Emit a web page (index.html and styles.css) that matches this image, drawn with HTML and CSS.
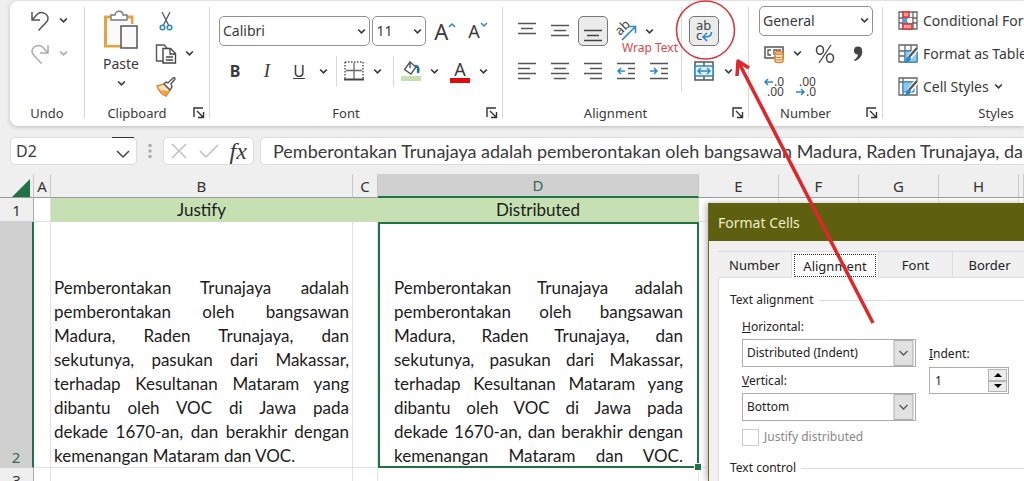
FILE: index.html
```html
<!DOCTYPE html>
<html lang="en">
<head>
<meta charset="utf-8">
<title>Format Cells</title>
<link rel="stylesheet" href="styles.css">
</head>
<body>
<svg class="sprite" aria-hidden="true">
  <symbol id="chev" viewBox="0 0 8 6"><path d="M1 1.200 4 4.200 7 1.200" fill="none" stroke="currentColor" stroke-width="1.500"/></symbol>
  <symbol id="launch" viewBox="0 0 12 12"><path d="M1 10V1h9M4 4l6 6M10.500 5v5.500H5" fill="none" stroke="#333" stroke-width="1.400"/></symbol>
</svg>

<header class="ribbon">
  <section class="group undo">
    <div class="body three">
      <div class="row">
        <button class="tool" aria-label="Undo"><svg width="20" height="22" viewBox="0 0 20 22"><path d="M2 2v8h8M2.500 9.500 7 4.500c4-4 11-1 11 4 0 2-1 3-2 4L8.500 20.500" fill="none" stroke="#555" stroke-width="1.500"/></svg></button>
        <button class="drop" aria-label="Undo list"><svg><use href="#chev"/></svg></button>
      </div>
      <div class="row faded">
        <button class="tool" aria-label="Redo"><svg width="20" height="22" viewBox="0 0 20 22"><path d="M18 2v8h-8M17.500 9.500 13 4.500C9 .5 2 3.500 2 8.500c0 2 1 3 2 4l7.500 8" fill="none" stroke="#aaa" stroke-width="1.500"/></svg></button>
        <button class="drop" aria-label="Redo list"><svg><use href="#chev"/></svg></button>
      </div>
    </div>
    <footer><span>Undo</span></footer>
  </section>
  <span class="divider"></span>

  <section class="group clipboard">
    <div class="body split">
      <button class="paste">
        <svg width="36" height="40" viewBox="0 0 36 40"><path d="M10 7H2.500v29H18M22 7h7v7" fill="none" stroke="#e8a33d" stroke-width="3"/><path d="M4 9h24v6H18v20H4z" fill="#fafafa"/><path d="M8 10V5h4c0-5 8-5 8 0h4v5z" fill="#fff" stroke="#777" stroke-width="1.300"/><path d="M18 16h16v22H18z" fill="#fafafa" stroke="#555" stroke-width="1.500"/></svg>
        <span>Paste</span>
        <svg class="chev"><use href="#chev"/></svg>
      </button>
      <div class="three">
        <div class="row"><button class="tool" aria-label="Cut"><svg width="22" height="22" viewBox="0 0 22 22"><path d="M7 2l6.500 13M15 2 8.500 15" fill="none" stroke="#555" stroke-width="1.300"/><circle cx="7.500" cy="17.500" r="2.300" fill="none" stroke="#2b88c8" stroke-width="1.500"/><circle cx="14.500" cy="17.500" r="2.300" fill="none" stroke="#2b88c8" stroke-width="1.500"/></svg></button></div>
        <div class="row"><button class="tool" aria-label="Copy"><svg width="22" height="22" viewBox="0 0 22 22"><path d="M8 18H1.500V2H9l3 3" fill="none" stroke="#555" stroke-width="1.400"/><path d="M8 5.500h7.500l5 5V20H8z" fill="#fff" stroke="#444" stroke-width="1.400"/><path d="M15 6v5h5M11 14h7M11 17h7" fill="none" stroke="#444" stroke-width="1.300"/></svg></button><button class="drop" aria-label="Copy options"><svg><use href="#chev"/></svg></button></div>
        <div class="row"><button class="tool" aria-label="Format Painter"><svg width="22" height="22" viewBox="0 0 22 22"><path d="M2 10l7-2 6 6-4 6q-6-2-9-10z" fill="#fde3bd" stroke="#e0862a" stroke-width="1.500"/><path d="M5 14l8 1-2 5z" fill="#f0a040"/><path d="M9 8l2-2 2 1 5-5q2-1 2 1l-4 5 1 3-2 3z" fill="#fff" stroke="#555" stroke-width="1.400"/></svg></button></div>
      </div>
    </div>
    <footer><span>Clipboard</span><button class="launch" aria-label="Clipboard settings"><svg><use href="#launch"/></svg></button></footer>
  </section>
  <span class="divider"></span>

  <section class="group font">
    <div class="body two">
      <div class="row">
        <div class="pick name"><select aria-label="Font"><option>Calibri</option></select><svg><use href="#chev"/></svg></div>
        <div class="pick size"><select aria-label="Font size"><option>11</option></select><svg><use href="#chev"/></svg></div>
        <button class="grow" aria-label="Increase font size"><span>A</span><svg width="8" height="6" viewBox="0 0 8 6"><path d="M1 5l3-3 3 3" fill="none" stroke="#2b88c8" stroke-width="1.500"/></svg></button>
        <button class="grow small" aria-label="Decrease font size"><span>A</span><svg width="8" height="6" viewBox="0 0 8 6"><path d="M1 1l3 3 3-3" fill="none" stroke="#2b88c8" stroke-width="1.500"/></svg></button>
      </div>
      <div class="row">
        <button class="letter"><b>B</b></button>
        <button class="letter"><i>I</i></button>
        <button class="letter"><u>U</u></button>
        <button class="drop" aria-label="Underline options"><svg><use href="#chev"/></svg></button>
        <span class="bar"></span>
        <button class="tool" aria-label="Borders"><svg width="20" height="20" viewBox="0 0 20 20"><path d="M1 1h18M1 1v17M19 1v17" fill="none" stroke="#555" stroke-width="1.500" stroke-dasharray="1.500 1.500"/><path d="M10 2v16M2 9.500h16" fill="none" stroke="#666" stroke-width="1.300"/><path d="M0 18.500h20" stroke="#444" stroke-width="2"/></svg></button>
        <button class="drop" aria-label="Border options"><svg><use href="#chev"/></svg></button>
        <span class="bar"></span>
        <button class="tool" aria-label="Fill colour"><svg width="20" height="22" viewBox="0 0 20 22"><path d="M9 2 3.500 9.500 10 14l5-7-6-5v6" fill="#fff" stroke="#555" stroke-width="1.400"/><path d="M14 6c3 0 4 2 3 7" fill="none" stroke="#1f6fb0" stroke-width="2.500"/><path d="M0 16h20v5H0z" fill="#c6deb1"/></svg></button>
        <button class="drop" aria-label="Fill colours"><svg><use href="#chev"/></svg></button>
        <button class="tool ink" aria-label="Font colour"><span>A</span></button>
        <button class="drop" aria-label="Font colours"><svg><use href="#chev"/></svg></button>
      </div>
    </div>
    <footer><span>Font</span><button class="launch" aria-label="Font settings"><svg><use href="#launch"/></svg></button></footer>
  </section>
  <span class="divider"></span>

  <section class="group align">
    <div class="body split">
      <div class="two">
        <div class="row">
          <button class="sq" aria-label="Top align"><svg width="18" height="18" viewBox="0 0 18 18"><path d="M0 1.500h18M3 6.500h12M0 11.500h18" stroke="#555" stroke-width="1.500"/></svg></button>
          <button class="sq" aria-label="Middle align"><svg width="18" height="18" viewBox="0 0 18 18"><path d="M0 3.500h18M3 8.500h12M0 13.500h18" stroke="#555" stroke-width="1.500"/></svg></button>
          <button class="sq on" aria-label="Bottom align"><svg width="18" height="18" viewBox="0 0 18 18"><path d="M0 8.500h18M3 13.500h12M0 18.500h18" stroke="#444" stroke-width="1.500"/></svg></button>
          <button class="sq" aria-label="Orientation"><svg width="22" height="22" viewBox="0 0 22 22"><text x="5" y="16" font-size="13" fill="#444" transform="rotate(-45 5 16)">ab</text><path d="M7 20 20 7M13.500 6.500H20.500V13" fill="none" stroke="#2b88c8" stroke-width="1.600"/></svg></button>
          <button class="drop" aria-label="Orientation options"><svg><use href="#chev"/></svg></button>
        </div>
        <div class="row">
          <button class="sq" aria-label="Align left"><svg width="18" height="18" viewBox="0 0 18 18"><path d="M0 1.500h18M0 6.500h12M0 11.500h18M0 16.500h12" stroke="#555" stroke-width="1.500"/></svg></button>
          <button class="sq" aria-label="Center"><svg width="18" height="18" viewBox="0 0 18 18"><path d="M0 1.500h18M3 6.500h12M0 11.500h18M3 16.500h12" stroke="#555" stroke-width="1.500"/></svg></button>
          <button class="sq" aria-label="Align right"><svg width="18" height="18" viewBox="0 0 18 18"><path d="M0 1.500h18M6 6.500h12M0 11.500h18M6 16.500h12" stroke="#555" stroke-width="1.500"/></svg></button>
          <button class="sq" aria-label="Decrease indent"><svg width="18" height="18" viewBox="0 0 18 18"><path d="M0 1.500h18M11 6.500h7M11 11.500h7M0 16.500h18" stroke="#555" stroke-width="1.500"/><path d="M8 9H1M4 6 1 9l3 3" fill="none" stroke="#2b88c8" stroke-width="1.500"/></svg></button>
          <button class="sq" aria-label="Increase indent"><svg width="18" height="18" viewBox="0 0 18 18"><path d="M0 1.500h18M11 6.500h7M11 11.500h7M0 16.500h18" stroke="#555" stroke-width="1.500"/><path d="M0 9h7M4 6l3 3-3 3" fill="none" stroke="#2b88c8" stroke-width="1.500"/></svg></button>
        </div>
      </div>
      <span class="bar tall"></span>
      <div class="two">
        <div class="row"><button class="sq on" aria-label="Wrap Text"><svg width="20" height="22" viewBox="0 0 20 22"><text x="2" y="10" font-size="13" fill="#444">ab</text><text x="2" y="20" font-size="13" fill="#444">c</text><path d="M17.500 12c0 4-2 5-8 5M13 13l-4 4 4 4" fill="none" stroke="#2b88c8" stroke-width="1.600"/></svg></button></div>
        <div class="row"><button class="sq" aria-label="Merge and center"><svg width="20" height="20" viewBox="0 0 20 20"><path d="M1 1h18v18H1zM10 1v4M10 15v4" fill="#fff" stroke="#555" stroke-width="1.500"/><path d="M1 5h18v10H1z" fill="#e2f1fb" stroke="#2b88c8" stroke-width="1.500"/><path d="M4 10h12M7 7l-3 3 3 3M13 7l3 3-3 3" fill="none" stroke="#2b88c8" stroke-width="1.400"/></svg></button><button class="drop" aria-label="Merge options"><svg><use href="#chev"/></svg></button></div>
      </div>
    </div>
    <footer><span>Alignment</span><button class="launch" aria-label="Alignment settings"><svg><use href="#launch"/></svg></button></footer>
  </section>
  <span class="divider"></span>

  <section class="group number">
    <div class="body three">
      <div class="row"><div class="pick format"><select aria-label="Number format"><option>General</option></select><svg><use href="#chev"/></svg></div></div>
      <div class="row">
        <button class="tool" aria-label="Accounting format"><svg width="20" height="20" viewBox="0 0 20 20"><path d="M1 3h18v11H1z" fill="#fff" stroke="#555" stroke-width="1.500"/><path d="M7 6H4v5h3M13 8V6h-3v5M14 6h3" fill="none" stroke="#555" stroke-width="1.300"/><path d="M11 9v8c0 2 8 2 8 0V9" fill="#fff" stroke="#e0862a" stroke-width="1.500"/><ellipse cx="15" cy="9" rx="4" ry="1.700" fill="#f6b15c" stroke="#e0862a"/><path d="M11 12c0 2 8 2 8 0M11 14.500c0 2 8 2 8 0" fill="none" stroke="#e0862a" stroke-width="1.300"/></svg></button>
        <button class="drop" aria-label="Accounting options"><svg><use href="#chev"/></svg></button>
        <button class="sq" aria-label="Percent style"><svg width="20" height="20" viewBox="0 0 20 20"><path d="M16 1 4 19" stroke="#444" stroke-width="1.300"/><ellipse cx="5" cy="6" rx="3.500" ry="4.300" fill="none" stroke="#444" stroke-width="1.500"/><ellipse cx="15" cy="14" rx="3.500" ry="4.300" fill="none" stroke="#444" stroke-width="1.500"/></svg></button>
        <button class="sq" aria-label="Comma style"><svg width="12" height="18" viewBox="0 0 12 18"><circle cx="6" cy="5.500" r="4" fill="#444"/><path d="M10 5c1 5-2 9-7 11l-1-1c3-2 4-4 4-7z" fill="#444"/></svg></button>
      </div>
      <div class="row">
        <button class="tool" aria-label="Increase decimal"><svg width="22" height="20" viewBox="0 0 22 20"><path d="M10 5H2M5 2 2 5l3 3" fill="none" stroke="#2b88c8" stroke-width="1.500"/><text x="11" y="9" font-size="12" fill="#444">.0</text><text x="4" y="19" font-size="12" fill="#444">.00</text></svg></button>
        <button class="sq" aria-label="Decrease decimal"><svg width="22" height="20" viewBox="0 0 22 20"><path d="M1 15h8M6 12l3 3-3 3" fill="none" stroke="#2b88c8" stroke-width="1.500"/><text x="4" y="9" font-size="12" fill="#444">.00</text><text x="11" y="19" font-size="12" fill="#444">.0</text></svg></button>
      </div>
    </div>
    <footer><span>Number</span><button class="launch" aria-label="Number settings"><svg><use href="#launch"/></svg></button></footer>
  </section>
  <span class="divider"></span>

  <section class="group styles">
    <div class="body three">
      <button class="row"><svg width="20" height="20" viewBox="0 0 20 20"><path d="M1 1h18v17H1zM1 7h18M1 12h18M5 1v17M15 1v17" fill="#fff" stroke="#666" stroke-width="1.300"/><path d="M5 1h6v5H5zM5 13h9v5H5z" fill="#f99" stroke="#d9363e" stroke-width="1.500"/><path d="M5 7h4v5H5z" fill="#4a9fdb"/><path d="M10 7h4v5h-4z" fill="#fff"/></svg>Conditional Formatting</button>
      <button class="row"><svg width="20" height="20" viewBox="0 0 20 20"><path d="M1 1h18v17H1zM1 7h18M1 12h6M7 1v17M13 1v6" fill="#fff" stroke="#666" stroke-width="1.300"/><path d="M7 7h12v11H7z" fill="#8cc6ee" stroke="#2b88c8"/><path d="M19 4 11 14" stroke="#fff" stroke-width="5"/><path d="M19 4 11 13" stroke="#555" stroke-width="2.400"/><path d="M11 12q2 1 2 3-2 4-8 4 3-1 3-4 1-3 3-3z" fill="#2b88c8"/></svg>Format as Table</button>
      <button class="row"><svg width="20" height="20" viewBox="0 0 20 20"><path d="M1 1h18v17H1zM1 5h18M5 1v17" fill="#fff" stroke="#666" stroke-width="1.300"/><path d="M5 5h11v10H5z" fill="#8cc6ee" stroke="#2b88c8"/><path d="M19 4 11 14" stroke="#fff" stroke-width="5"/><path d="M19 4 11 13" stroke="#555" stroke-width="2.400"/><path d="M11 12q2 1 2 3-2 4-8 4 3-1 3-4 1-3 3-3z" fill="#2b88c8"/></svg>Cell Styles<svg class="chev"><use href="#chev"/></svg></button>
    </div>
    <footer><span>Styles</span></footer>
  </section>
</header>

<div class="formula">
  <div class="namebox"><input type="text" value="D2" aria-label="Name box"><button aria-label="Names"><svg width="14" height="8" viewBox="0 0 14 8"><path d="M1 1l6 6 6-6" fill="none" stroke="#444" stroke-width="1.500"/></svg></button></div>
  <svg class="grip" width="4" height="16" viewBox="0 0 4 16"><path d="M.5 1h3v3h-3zM.5 6.500h3v3h-3zM.5 12h3v3h-3z" fill="#aaa"/></svg>
  <div class="edit">
    <button aria-label="Cancel"><svg width="16" height="16" viewBox="0 0 16 16"><path d="M1 1l14 14M15 1 1 15" stroke="#bbb" stroke-width="1.400"/></svg></button>
    <button aria-label="Enter"><svg width="20" height="14" viewBox="0 0 20 14"><path d="M1 7l6 6L19 1" fill="none" stroke="#bbb" stroke-width="1.400"/></svg></button>
    <button class="fx">fx</button>
  </div>
  <input class="content" type="text" aria-label="Formula" value="Pemberontakan Trunajaya adalah pemberontakan oleh bangsawan Madura, Raden Trunajaya, dan">
</div>

<main class="sheet">
  <table>
    <colgroup><col class="c-head"><col class="c-a"><col class="c-b"><col class="c-c"><col class="c-d"><col class="c-e"><col class="c-e"><col class="c-e"><col class="c-e"><col></colgroup>
    <thead>
      <tr><th class="corner"><svg width="18" height="18" viewBox="0 0 18 18"><path d="M18 0v18H0z" fill="#217346"/></svg></th><th>A</th><th>B</th><th>C</th><th class="sel">D</th><th>E</th><th>F</th><th>G</th><th>H</th><th></th></tr>
    </thead>
    <tbody>
      <tr class="r1"><th>1</th><td></td><td class="green">Justify</td><td class="green"></td><td class="green">Distributed</td><td></td><td></td><td></td><td></td><td></td></tr>
      <tr class="r2"><th class="sel">2</th><td></td>
        <td class="text"><p><span>Pemberontakan Trunajaya adalah</span><span>pemberontakan oleh bangsawan</span><span>Madura, Raden Trunajaya, dan</span><span>sekutunya, pasukan dari Makassar,</span><span>terhadap Kesultanan Mataram yang</span><span>dibantu oleh VOC di Jawa pada</span><span>dekade 1670-an, dan berakhir dengan</span><span class="last">kemenangan Mataram dan VOC.</span></p></td>
        <td></td>
        <td class="text active"><p><span>Pemberontakan Trunajaya adalah</span><span>pemberontakan oleh bangsawan</span><span>Madura, Raden Trunajaya, dan</span><span>sekutunya, pasukan dari Makassar,</span><span>terhadap Kesultanan Mataram yang</span><span>dibantu oleh VOC di Jawa pada</span><span>dekade 1670-an, dan berakhir dengan</span><span>kemenangan Mataram dan VOC.</span></p></td>
        <td></td><td></td><td></td><td></td><td></td></tr>
      <tr class="r1"><th>3</th><td></td><td></td><td></td><td></td><td></td><td></td><td></td><td></td><td></td></tr>
    </tbody>
  </table>
</main>

<section class="dialog" role="dialog" aria-labelledby="dlg-title">
  <h1 id="dlg-title">Format Cells</h1>
  <div class="tabs" role="tablist">
    <button role="tab">Number</button><button role="tab" class="current" aria-selected="true"><span>Alignment</span></button><button role="tab">Font</button><button role="tab">Border</button><span class="rest"></span>
  </div>
  <div class="panel">
    <h2>Text alignment</h2>
    <div class="fields">
      <div class="main">
        <label for="hor"><u>H</u>orizontal:</label>
        <div class="combo"><select id="hor"><option>Distributed (Indent)</option></select><svg viewBox="0 0 20 26"><path d="M.5.5h19v25H.5z" fill="#e1e1e1" stroke="#adadad"/><path d="M6 11l4 4 4-4" fill="none" stroke="#555" stroke-width="1.300"/></svg></div>
        <label for="ver"><u>V</u>ertical:</label>
        <div class="combo"><select id="ver"><option>Bottom</option></select><svg viewBox="0 0 20 26"><path d="M.5.5h19v25H.5z" fill="#e1e1e1" stroke="#adadad"/><path d="M6 11l4 4 4-4" fill="none" stroke="#555" stroke-width="1.300"/></svg></div>
        <label class="check"><input type="checkbox" disabled>Justify distributed</label>
      </div>
      <div class="side">
        <label for="ind"><u>I</u>ndent:</label>
        <div class="spin"><input id="ind" type="text" value="1"><span><button aria-label="More"><svg width="8" height="5" viewBox="0 0 8 5"><path d="M0 5l4-4 4 4z"/></svg></button><button aria-label="Less"><svg width="8" height="5" viewBox="0 0 8 5"><path d="M0 0l4 4 4-4z"/></svg></button></span></div>
      </div>
    </div>
    <h2>Text control</h2>
  </div>
</section>

<div class="note">Wrap Text</div>
<svg class="marks" width="240" height="330" viewBox="660 0 240 330" aria-hidden="true"><circle cx="705.500" cy="30" r="29" fill="none" stroke="#d8383e" stroke-width="1.600"/><path d="M873 323 739 63M737 76l1-15 11 7" fill="none" stroke="#e0262a" stroke-width="3.500" stroke-linejoin="round"/></svg>
</body>
</html>
```
FILE: styles.css
```css
* { box-sizing: border-box; }
body { margin: 0; height: 100vh; overflow: hidden; position: relative; display: flex; flex-direction: column; background: #efefef; color: #3a3a3a; font: 13px/16px "Noto Sans", "Open Sans", sans-serif; }
button, input, select { font: inherit; color: inherit; margin: 0; padding: 0; border: 0; background: none; }
select { appearance: none; width: 100%; height: 100%; }
svg { overflow: visible; }
.sprite { position: absolute; width: 0; height: 0; }

.ribbon { display: flex; flex: none; height: 125px; margin: 1px 0 0 10px; background: #fff; border-radius: 8px 0 0 8px; box-shadow: 0 1px 4px #bbb; overflow: hidden; }
.divider { flex: none; width: 1px; margin: 6px 0 8px; background: #d8d8d8; }
.group { flex: none; display: flex; flex-direction: column; padding-top: 3px; }
.body { flex: 1; }
.split { display: flex; }
.row { display: flex; align-items: center; height: 33px; }
.two { padding-top: 7px; }
.two .row { height: 40px; }
footer { display: flex; height: 16px; margin-bottom: 5px; }
footer span { flex: 1; text-align: center; }
.launch { flex: none; width: 20px; display: grid; place-items: center; }
.launch svg { width: 12px; height: 12px; }
.tool, .drop, .sq, .letter { display: grid; place-items: center; flex: none; height: 30px; }
.tool { width: 24px; }
.drop { width: 22px; }
.drop svg, .pick svg, .chev { width: 9px; height: 7px; }
.letter { width: 32px; font-size: 16px; }
.letter i { font-family: "Liberation Serif", serif; font-size: 19px; }
.sq { width: 30px; }
.sq.on { background: #ebebeb; border: 1px solid #777; border-radius: 5px; }
.faded { color: #aaa; }
.bar { flex: none; width: 1px; height: 30px; margin: 0 5px; background: #d8d8d8; }

.undo { width: 74px; }
.undo .row { padding-left: 18px; }
.clipboard { width: 124px; }
.paste { width: 72px; display: flex; flex-direction: column; align-items: center; padding: 6px 0 0; font-size: 14px; }
.paste span { margin: 6px 0 8px; }
.clipboard .tool { width: 26px; }
.clipboard .drop { width: 20px; }
.clipboard .three { margin-left: -4px; }

.pick { display: grid; align-items: center; height: 30px; border: 1px solid #919191; border-radius: 5px; }
.pick > * { grid-area: 1 / 1; }
.pick select { padding-left: 3px; font-size: 14px; }
.pick svg { justify-self: end; margin-right: 3px; pointer-events: none; }
.font { width: 292px; }
.font .body { padding-left: 9px; }
.name { width: 152px; }
.size { width: 54px; margin: 0 8px 0 2px; }
.grow { display: flex; align-items: flex-start; width: 34px; font-size: 22px; line-height: 24px; }
.grow svg { margin-top: 3px; }
.grow.small { font-size: 18px; }
.font .letter + .drop { width: 16px; }
.ink { border-bottom: 5px solid #e00b0b; height: 24px; width: 20px; margin: 0 2px 0 5px; font-size: 18px; }

.align { width: 245px; }
.align .body { padding-left: 9px; }
.align .two:first-child .row { gap: 3px; }
.align .two:first-child { width: 164px; }
.align .two:first-child .drop { width: 10px; }
.align .drop { width: 18px; }
.bar.tall { height: 85px; margin: 3px 7px 0 5px; }

.number { width: 133px; }
.number .body { padding-left: 10px; }
.format { width: 114px; }
.number .tool { margin-left: 3px; }
.number .drop { margin-right: 2px; }
.number .sq { margin-right: 3px; }
.number .tool + .sq { margin-left: 5px; }

.styles { width: 226px; padding-left: 15px; }
.styles footer { margin-left: -15px; }
.styles .row { gap: 5px; font-size: 14px; white-space: nowrap; }

.formula { display: flex; flex: none; align-items: center; height: 28px; margin: 11px 0 9px 10px; font-size: 16px; }
.namebox, .edit, .content { height: 28px; background: #fff; border: 1px solid #dcdcdc; border-radius: 5px; }
.namebox { display: flex; align-items: center; width: 127px; padding: 0 2px 0 5px; }
.namebox input { flex: 1; min-width: 0; }
.namebox button { width: 22px; height: 28px; border-top: 1px solid #333; }
.grip { margin: 0 11px; }
.edit { display: flex; align-items: center; width: 91px; }
.edit button { flex: 1; display: grid; place-items: center; }
.edit .fx { font: italic 24px/24px "Liberation Serif", serif; }
.content { flex: 1; min-width: 0; margin-left: 6px; padding-left: 12px; border-right: 0; border-radius: 5px 0 0 5px; font-family: Lato, sans-serif; font-size: 18px; }

.sheet { flex: 1; min-height: 0; overflow: hidden; }
table { table-layout: fixed; width: 100%; min-width: 1024px; border-collapse: separate; border-spacing: 0; font-family: Lato, sans-serif; font-size: 17px; line-height: 20px; color: #1c1c1c; }
.c-head { width: 34px; } .c-a { width: 17px; } .c-b { width: 302px; } .c-c { width: 25px; } .c-d { width: 321px; } .c-e { width: 80px; }
th, td { padding: 0; }
th { font-weight: normal; font-family: "Noto Sans", sans-serif; font-size: 15px; color: #333; background: #efefef; }
thead th { height: 24px; border-right: 1px solid #c8c8c8; border-bottom: 1px solid #999; }
thead .corner { text-align: right; padding: 4px 3px 0 0; line-height: 0; }
thead .sel { background: #d0d0d0; border-bottom: 2px solid #217346; color: #3c6650; }
td { background: #fff; border-right: 1px solid #e2e2e2; border-bottom: 1px solid #e2e2e2; text-align: center; }
tbody th { border-right: 1px solid #aaa; border-bottom: 1px solid #d0d0d0; }
tbody th.sel { background: #d0d0d0; border-right: 2px solid #217346; color: #3c6650; vertical-align: bottom; }
.r1 > * { height: 24px; }
.r2 > * { height: 246px; }
td.green { background: #c6e0b4; border-color: #c6e0b4; }
td.text { position: relative; vertical-align: bottom; padding: 0 3px; }
td.active { border: 0; box-shadow: inset 0 0 0 2px #217346; padding: 0 16px 1px; }
td.active::after { content: ""; position: absolute; right: -2px; bottom: -2px; width: 6px; height: 6px; background: #217346; outline: 1px solid #fff; }
.text p { margin: 0 0 -1px; line-height: 24px; }
.text span { display: block; white-space: nowrap; text-align: justify; text-align-last: justify; }
.text .last { text-align-last: left; }

.dialog { position: absolute; left: 708px; right: 0; top: 203px; bottom: 0; overflow: hidden; display: flex; flex-direction: column; background: #f0f0f0; border: 1px solid #6a6a20; border-width: 0 0 0 1px; box-shadow: -2px 0 6px #bbb; color: #222; }
.dialog h1 { flex: none; margin: 0; padding: 0 9px; height: 38px; font-size: 14px; font-weight: normal; line-height: 40px; color: #eeeecb; background: #5f5f10; }
.tabs { display: flex; flex: none; margin: 10px 0 0 9px; height: 27px; }
.tabs button, .rest { flex: none; width: 74px; border: 1px solid #dcdcdc; border-left: 0; }
.tabs .current { width: 87px; background: #fff; border-bottom-color: #fff; padding: 2px; }
.current span { display: grid; place-items: center; height: 23px; border: 1px dotted #333; }
.rest { flex: 1; }
.panel { flex: 1; margin-left: 9px; padding: 13px 0 0 11px; background: #fff; border-left: 1px solid #dcdcdc; font-size: 12px; }
.panel h2 { display: flex; align-items: center; gap: 5px; margin: 0; font-size: 12px; font-weight: normal; line-height: 18px; }
.panel h2::after { content: ""; flex: 1; height: 1px; background: #dcdcdc; }
.fields { display: flex; gap: 13px; padding: 8px 0 12px 12px; }
.main { width: 174px; }
.main label { display: block; line-height: 20px; }
.main label + .combo { margin: 2px 0 4px; }
.combo { display: grid; align-items: center; height: 28px; border: 1px solid #adadad; }
.combo > * { grid-area: 1 / 1; }
.combo select { padding-left: 4px; }
.combo svg { width: 21px; height: 26px; justify-self: end; margin-right: 1px; pointer-events: none; }
.main .check { display: flex; align-items: center; gap: 5px; margin-top: 6px; color: #888; }
.check input { appearance: none; width: 17px; height: 17px; border: 1px solid #ccc; }
.side { padding-top: 28px; }
.side label { display: block; line-height: 18px; }
.spin { display: flex; width: 80px; height: 27px; margin-top: 4px; border: 1px solid #adadad; }
.spin input { flex: 1; min-width: 0; padding-left: 5px; }
.spin span { display: grid; width: 21px; padding: 1px; }
.spin button { display: grid; place-items: center; background: #ececec; border: 1px solid #b5b5b5; }

.note { position: absolute; left: 622px; top: 40px; font-size: 12px; color: #d8484c; }
.marks { position: absolute; left: 660px; top: 0; pointer-events: none; }
```
